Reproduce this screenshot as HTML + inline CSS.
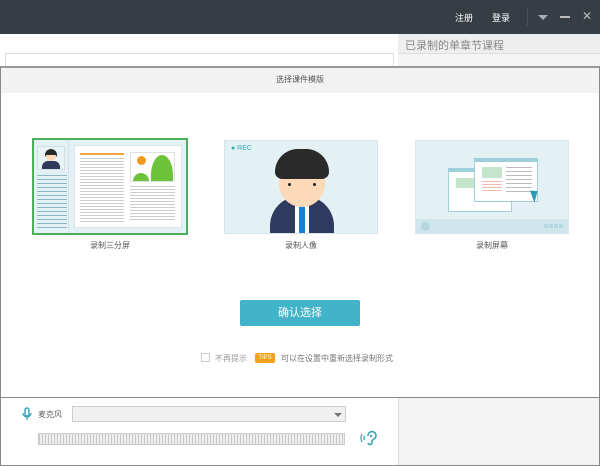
<!DOCTYPE html>
<html><head><meta charset="utf-8"><style>
*{margin:0;padding:0;box-sizing:border-box}
body{width:600px;height:466px;overflow:hidden;background:#fff;font-family:"Liberation Sans","Noto Sans CJK SC",sans-serif;position:relative;font-size:9px;color:#555}
.a{position:absolute}
</style></head><body>
<div class="a" style="left:0;top:0;width:600px;height:34px;background:#373d44"></div>
<div class="a" style="left:455px;top:11px;color:#fff;font-size:9px">注册</div>
<div class="a" style="left:492px;top:11px;color:#fff;font-size:9px">登录</div>
<div class="a" style="left:527px;top:8px;width:1px;height:18px;background:#4a5057"></div>
<div class="a" style="left:538px;top:15px;width:0;height:0;border-left:5px solid transparent;border-right:5px solid transparent;border-top:5px solid #aab"></div>
<div class="a" style="left:560px;top:16px;width:10px;height:2px;background:#bbb"></div>
<div class="a" style="left:582px;top:9px;color:#bbb;font-size:12px">✕</div>
<div class="a" style="left:5px;top:53px;width:389px;height:16px;border:1px solid #ddd"></div>
<div class="a" style="left:398px;top:34px;width:202px;height:20px;background:#eee;border-bottom:1px solid #ddd"></div>
<div class="a" style="left:405px;top:37px;font-size:11px;color:#888">已录制的单章节课程</div>
<div class="a" style="left:398px;top:54px;width:202px;height:14px;background:#f5f5f5"></div>
<!-- modal -->
<div class="a" style="left:0;top:66px;width:600px;height:332px;background:#fff;border:1px solid #888;border-top:2px solid #999"></div>
<div class="a" style="left:1px;top:68px;width:598px;height:25px;background:#f2f2f2"></div>
<div class="a" style="left:0;top:74px;width:600px;text-align:center;font-size:8px;color:#555">选择课件模版</div>
<!-- card1 -->
<div class="a" style="left:32px;top:138px;width:156px;height:97px;border:2px solid #4caf5a;background:#e3f1f4"></div>
<div class="a" style="left:68px;top:140px;width:1px;height:93px;background:#cfe3e8"></div>
<div class="a" style="left:37px;top:146px;width:28px;height:24px;border:1px solid #cfe1e6;background:#e8f3f6"></div>
<div class="a" style="left:45px;top:149px;width:12px;height:8px;background:#2a2a2a;border-radius:6px 6px 2px 2px"></div>
<div class="a" style="left:46px;top:155px;width:10px;height:6px;background:#fbd9b9;border-radius:0 0 5px 5px"></div>
<div class="a" style="left:42px;top:161px;width:18px;height:8px;background:#2d3a5c;border-radius:6px 6px 0 0"></div>
<div class="a" style="left:37px;top:175px;width:30px;height:54px;background:repeating-linear-gradient(#8ab8c8 0 1px,transparent 1px 4px)"></div>
<div class="a" style="left:74px;top:145px;width:108px;height:83px;background:#fff;border:1px solid #d8e4e8"></div>
<div class="a" style="left:80px;top:153px;width:44px;height:2px;background:#f0a640"></div>
<div class="a" style="left:80px;top:158px;width:44px;height:64px;background:repeating-linear-gradient(#ccc 0 1px,transparent 1px 3px)"></div>
<div class="a" style="left:130px;top:152px;width:45px;height:30px;border:1px solid #e0e0e0;overflow:hidden">
<div class="a" style="left:6px;top:3px;width:9px;height:9px;border-radius:50%;background:#f39a1e"></div>
<div class="a" style="left:2px;top:20px;width:16px;height:16px;border-radius:50%;background:#6cc33a"></div>
<div class="a" style="left:20px;top:2px;width:22px;height:40px;border-radius:50% 50% 0 0;background:#6cc33a"></div></div>
<div class="a" style="left:130px;top:186px;width:45px;height:34px;background:repeating-linear-gradient(#ccc 0 1px,transparent 1px 3px)"></div>
<div class="a" style="left:32px;top:240px;width:156px;text-align:center;font-size:8px">录制三分屏</div>
<!-- card2 -->
<div class="a" style="left:224px;top:140px;width:154px;height:94px;border:1px solid #d8e6ea;background:#e3f1f4;overflow:hidden">
<div class="a" style="left:6px;top:4px;color:#3aa6b8;font-size:7px">● REC</div>
<div class="a" style="left:45px;top:55px;width:64px;height:50px;background:#2e3a5e;border-radius:30px 30px 0 0"></div>
<div class="a" style="left:70px;top:60px;width:14px;height:40px;background:#fff"></div>
<div class="a" style="left:74px;top:62px;width:6px;height:36px;background:#1c7fd6"></div>
<div class="a" style="left:54px;top:20px;width:46px;height:46px;border-radius:50%;background:#fbd9b9"></div>
<div class="a" style="left:50px;top:8px;width:54px;height:30px;border-radius:26px 26px 8px 8px;background:#2a2a2a"></div>
<div class="a" style="left:63px;top:42px;width:3px;height:3px;border-radius:50%;background:#222"></div>
<div class="a" style="left:88px;top:42px;width:3px;height:3px;border-radius:50%;background:#222"></div>
</div>
<div class="a" style="left:224px;top:240px;width:154px;text-align:center;font-size:8px">录制人像</div>
<!-- card3 -->
<div class="a" style="left:415px;top:140px;width:154px;height:94px;border:1px solid #d8e6ea;background:#e3f1f4;overflow:hidden">
<div class="a" style="left:0;top:78px;width:154px;height:16px;background:#cfe6ec"></div>
<div class="a" style="left:5px;top:81px;width:9px;height:9px;border-radius:50%;background:#b5d8e0"></div>
<div class="a" style="left:128px;top:83px;width:20px;height:4px;background:repeating-linear-gradient(90deg,#b5d8e0 0 4px,transparent 4px 5px)"></div>
<div class="a" style="left:32px;top:27px;width:64px;height:44px;background:#fff;border:1px solid #9ecfda;border-top:4px solid #9ecfda"></div>
<div class="a" style="left:40px;top:37px;width:20px;height:10px;background:#c5e6cc"></div>
<div class="a" style="left:58px;top:17px;width:64px;height:44px;background:#fff;border:1px solid #9ecfda;border-top:4px solid #9ecfda"></div>
<div class="a" style="left:66px;top:26px;width:20px;height:11px;background:#c5e6cc"></div>
<div class="a" style="left:66px;top:40px;width:20px;height:12px;background:repeating-linear-gradient(#f2b9b0 0 1px,transparent 1px 3px)"></div>
<div class="a" style="left:90px;top:26px;width:26px;height:26px;background:repeating-linear-gradient(#bbb 0 1px,transparent 1px 4px)"></div>
<div class="a" style="left:116px;top:48px;width:0;height:0;border-left:7px solid #2c9ab0;border-top:3px solid transparent;border-bottom:10px solid transparent;transform:rotate(-20deg)"></div>
</div>
<div class="a" style="left:415px;top:240px;width:154px;text-align:center;font-size:8px">录制屏幕</div>
<!-- button -->
<div class="a" style="left:240px;top:300px;width:120px;height:26px;background:#42b4c9;border-radius:2px;color:#fff;font-size:11px;text-align:center;line-height:26px">确认选择</div>
<div class="a" style="left:201px;top:353px;width:9px;height:9px;border:1px solid #ccc"></div>
<div class="a" style="left:215px;top:353px;font-size:8px;color:#999">不再提示</div>
<div class="a" style="left:255px;top:353px;width:20px;height:10px;background:#f4a21c;border-radius:2px;color:#fff;font-size:6px;line-height:10px;text-align:center">TIPS</div>
<div class="a" style="left:281px;top:353px;font-size:8px;color:#777">可以在设置中重新选择录制形式</div>
<!-- bottom -->
<div class="a" style="left:398px;top:398px;width:202px;height:68px;background:#f3f3f3;border-left:1px solid #ddd"></div>
<svg class="a" style="left:21px;top:407px" width="12" height="14" viewBox="0 0 12 14"><rect x="4" y="1" width="4" height="8" rx="2" fill="none" stroke="#3aa6b8" stroke-width="1.5"/><path d="M2 6a4 4 0 0 0 8 0M6 10v3" fill="none" stroke="#3aa6b8" stroke-width="1.3"/></svg>
<div class="a" style="left:38px;top:409px;font-size:8px;color:#666">麦克风</div>
<div class="a" style="left:72px;top:406px;width:274px;height:16px;background:#f0f0f0;border:1px solid #ccc"></div>
<div class="a" style="left:334px;top:413px;border-left:4px solid transparent;border-right:4px solid transparent;border-top:4px solid #777"></div>
<div class="a" style="left:38px;top:433px;width:307px;height:12px;background:repeating-linear-gradient(90deg,#c8c8c8 0 1px,#eee 1px 3px);border:1px solid #ccc"></div>
<svg class="a" style="left:359px;top:430px" width="18" height="16" viewBox="0 0 18 16"><path d="M3 4q-2 4 0 8M5.5 6q-1 2 0 4" fill="none" stroke="#3aa6b8" stroke-width="1.3"/><path d="M9 6a4 4 0 1 1 6 3q-2 1-2 3a2 2 0 0 1-4 1" fill="none" stroke="#3aa6b8" stroke-width="1.6"/><circle cx="12" cy="6" r="1.2" fill="#3aa6b8"/></svg>
<div class="a" style="left:0;top:398px;width:1px;height:68px;background:#888"></div>
<div class="a" style="left:599px;top:398px;width:1px;height:68px;background:#888"></div>
<div class="a" style="left:0;top:465px;width:600px;height:1px;background:#888"></div>
</body></html>
